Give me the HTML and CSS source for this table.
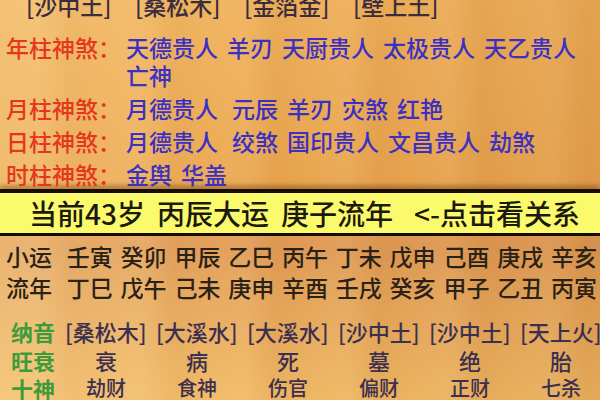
FILE: index.html
```html
<!DOCTYPE html>
<html lang="zh">
<head>
<meta charset="utf-8">
<title>八字</title>
<link rel="stylesheet" href="styles.css">
</head>
<body>
<div class="page">
  <div class="nayin-top">
    <span>[沙中土]</span><span>[桑松木]</span><span>[金箔金]</span><span>[壁上土]</span>
  </div>

  <div class="shensha">
    <div class="ss-row">
      <div class="ss-label">年柱神煞：</div>
      <div class="ss-vals"><span>天德贵人</span><span>羊刃</span><span>天厨贵人</span><span>太极贵人</span><span>天乙贵人</span><span>亡神</span></div>
    </div>
    <div class="ss-row">
      <div class="ss-label">月柱神煞：</div>
      <div class="ss-vals"><span class="wide">月德贵人</span><span>元辰</span><span>羊刃</span><span>灾煞</span><span>红艳</span></div>
    </div>
    <div class="ss-row">
      <div class="ss-label">日柱神煞：</div>
      <div class="ss-vals"><span class="wide">月德贵人</span><span>绞煞</span><span>国印贵人</span><span>文昌贵人</span><span>劫煞</span></div>
    </div>
    <div class="ss-row">
      <div class="ss-label">时柱神煞：</div>
      <div class="ss-vals"><span>金舆</span><span>华盖</span></div>
    </div>
  </div>

  <div class="current-bar">
    <span>当前43岁</span><span>丙辰大运</span><span>庚子流年</span><span class="link">&lt;-点击看关系</span>
  </div>

  <div class="yun">
    <div class="yun-row"><span class="yun-label">小运</span><span>壬寅</span><span>癸卯</span><span>甲辰</span><span>乙巳</span><span>丙午</span><span>丁未</span><span>戊申</span><span>己酉</span><span>庚戌</span><span>辛亥</span></div>
    <div class="yun-row"><span class="yun-label">流年</span><span>丁巳</span><span>戊午</span><span>己未</span><span>庚申</span><span>辛酉</span><span>壬戌</span><span>癸亥</span><span>甲子</span><span>乙丑</span><span>丙寅</span></div>
  </div>

  <div class="table">
    <div class="t-row nayin">
      <span class="t-label">纳音</span><span>[桑松木]</span><span>[大溪水]</span><span>[大溪水]</span><span>[沙中土]</span><span>[沙中土]</span><span>[天上火]</span>
    </div>
    <div class="t-row center">
      <span class="t-label">旺衰</span><span>衰</span><span>病</span><span>死</span><span>墓</span><span>绝</span><span>胎</span>
    </div>
    <div class="t-row center small">
      <span class="t-label">十神</span><span>劫财</span><span>食神</span><span>伤官</span><span>偏财</span><span>正财</span><span>七杀</span>
    </div>
  </div>
</div>
</body>
</html>
```

FILE: styles.css
```css
html, body {
  margin: 0;
  padding: 0;
}
body {
  width: 600px;
  height: 400px;
  overflow: hidden;
  font-family: "Noto Sans CJK SC", "Noto Sans", sans-serif;
  font-weight: 500;
  background:
    linear-gradient(to right, rgba(255, 236, 180, 0.28) 0%, rgba(255, 255, 255, 0) 40%, rgba(140, 60, 0, 0.10) 100%),
    repeating-linear-gradient(to right, rgba(255,255,255,0) 0px, rgba(255,240,200,0.08) 37px, rgba(160,80,10,0.06) 71px, rgba(255,255,255,0) 103px),
    linear-gradient(to bottom, #f0b25c 0%, #eba852 45%, #e19c58 62%, #e6a65c 72%, #f1ba66 100%);
}
.page {
  width: 600px;
}
.nayin-top {
  display: flex;
  padding-left: 26px;
  margin-top: -9px;
  height: 28px;
  font-size: 23px;
  line-height: 28px;
  color: #3b2c3e;
}
.nayin-top span {
  width: 109px;
  flex: none;
}
.shensha {
  margin-top: 14px;
  display: flex;
  flex-direction: column;
  gap: 5px;
}
.ss-row {
  display: grid;
  grid-template-columns: 117px 1fr;
  column-gap: 3px;
  padding-left: 6px;
  font-size: 23px;
  line-height: 28px;
}
.ss-label {
  color: #e6361d;
  white-space: nowrap;
}
.ss-vals {
  display: flex;
  flex-wrap: wrap;
  column-gap: 9px;
  color: #3c30c2;
}
.ss-vals .wide {
  margin-right: 5px;
}
.current-bar {
  margin-top: 1px;
  height: 40px;
  border-top: 4px solid #150c04;
  border-bottom: 3px solid #150c04;
  box-shadow: 0 -4px 4px rgba(90, 40, 0, 0.35);
  background: #fbfa6c;
  display: flex;
  align-items: center;
  gap: 12px;
  padding-left: 29px;
  font-size: 28px;
  line-height: 40px;
  color: #1b1a0c;
  white-space: nowrap;
}
.current-bar .link {
  margin-left: 9px;
}
.yun {
  margin-top: 5px;
  padding-left: 6px;
  color: #2a2216;
  font-size: 23px;
  line-height: 31px;
}
.yun-row {
  display: flex;
  gap: 7.8px;
  white-space: nowrap;
}
.yun-row .yun-label {
  margin-right: 7px;
}
.table {
  margin-top: 14px;
}
.t-row {
  display: grid;
  grid-template-columns: 45px repeat(6, 82px);
  column-gap: 9px;
  padding-left: 11px;
  font-size: 22px;
  line-height: 28.5px;
  color: #3c3050;
  white-space: nowrap;
}
.t-row .t-label {
  color: #3d9b3a;
  font-weight: 700;
  font-size: 22px;
}
.t-row.center span {
  text-align: center;
}
.t-row.center .t-label {
  text-align: left;
}
.t-row.small {
  font-size: 20px;
}
```
